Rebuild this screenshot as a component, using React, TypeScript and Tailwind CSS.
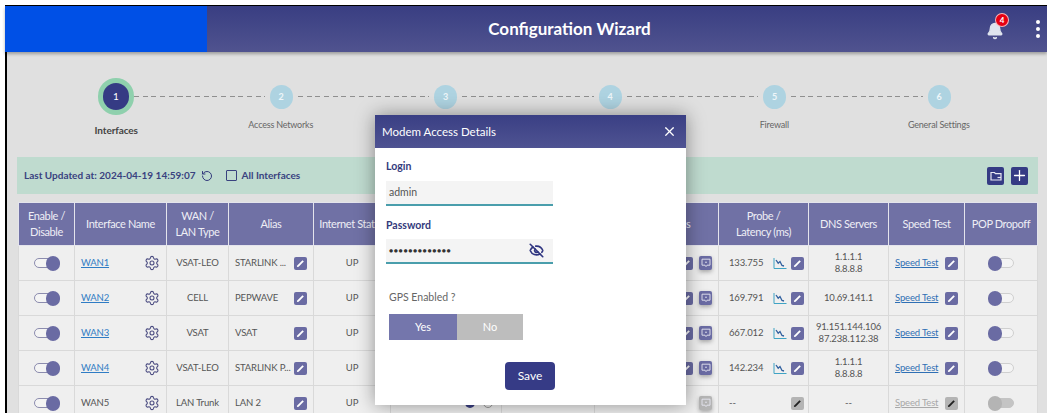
import { Bell, EyeOff, Plus, RotateCcw, Settings, X } from "lucide-react";

type Row = {
  name: string;
  type: string;
  alias: string;
  latency: string;
  dns: string[];
  disabled?: boolean;
};

const ROWS: Row[] = [
  { name: "WAN1", type: "VSAT-LEO", alias: "STARLINK ...", latency: "133.755", dns: ["1.1.1.1", "8.8.8.8"] },
  { name: "WAN2", type: "CELL", alias: "PEPWAVE", latency: "169.791", dns: ["10.69.141.1"] },
  { name: "WAN3", type: "VSAT", alias: "VSAT", latency: "667.012", dns: ["91.151.144.106", "87.238.112.38"] },
  { name: "WAN4", type: "VSAT-LEO", alias: "STARLINK P...", latency: "142.234", dns: ["1.1.1.1", "8.8.8.8"] },
  { name: "WAN5", type: "LAN Trunk", alias: "LAN 2", latency: "--", dns: ["--"], disabled: true },
];

const STEPS = ["Interfaces", "Access Networks", "", "", "Firewall", "General Settings"];

const COLUMNS: { label: string[]; width: string }[] = [
  { label: ["Enable /", "Disable"], width: "w-[56px]" },
  { label: ["Interface Name"], width: "w-[92px]" },
  { label: ["WAN /", "LAN Type"], width: "w-[62px]" },
  { label: ["Alias"], width: "w-[85px]" },
  { label: ["Internet Status"], width: "w-[77px]" },
  { label: [""], width: "w-[111px]" },
  { label: [""], width: "w-[93px]" },
  { label: ["Modem Access"], width: "w-[124px]" },
  { label: ["Probe /", "Latency (ms)"], width: "w-[90px]" },
  { label: ["DNS Servers"], width: "w-[80px]" },
  { label: ["Speed Test"], width: "w-[76px]" },
  { label: ["POP Dropoff"], width: "w-[73px]" },
];

function EditButton({ disabled }: { disabled?: boolean }) {
  return (
    <span
      className={`mt-[1px] flex h-[13px] w-[13px] shrink-0 items-center justify-center rounded-[2px] ${
        disabled ? "bg-[#b4b4b4] text-[#222]" : "bg-[#6a6ba3] text-white"
      }`}
    >
      <svg className="h-[9px] w-[9px]" viewBox="0 0 10 10" fill="currentColor" aria-hidden>
        <path d="M1 9l.4-1.9L7.2 1.3l1.5 1.5-5.8 5.8L1 9z" />
      </svg>
    </span>
  );
}

function RemoteButton({ disabled }: { disabled?: boolean }) {
  return (
    <span
      className={`flex h-[14px] w-[13px] shrink-0 items-center justify-center rounded-[2px] shadow-[0_2px_4px_rgba(0,0,0,0.3)] ${
        disabled ? "bg-[#b4b4b4]" : "bg-[#6a6ba3]"
      }`}
    >
      <svg className="h-[10px] w-[10px]" viewBox="0 0 10 10" fill="none" stroke="#e8e8f2" strokeWidth="0.9" aria-hidden>
        <path d="M1 1.2h8v6H6l-1 1.4-1-1.4H1z" />
        <circle cx="5" cy="4.2" r="0.8" fill="#e8e8f2" stroke="none" />
      </svg>
    </span>
  );
}

function ChartIcon() {
  return (
    <svg className="h-[13px] w-[14px] shrink-0" viewBox="0 0 14 13" fill="none" aria-hidden>
      <path d="M1 1v10.5h12.5" stroke="#3fa3c4" strokeWidth="1" />
      <path d="M3 3l2.2 3.2L7 4.5l2 4 2 .5" stroke="#2f5f9f" strokeWidth="1.3" />
    </svg>
  );
}

function Toggle({ on, disabled }: { on: boolean; disabled?: boolean }) {
  const knob = disabled ? "bg-[#b4b4b4]" : "bg-[#6a6ba3]";
  return (
    <span className="relative mx-auto block h-[15px] w-[26px]">
      <span
        className={`absolute left-0 right-0 top-[2.5px] h-[10px] rounded-full border ${
          disabled && !on ? "border-[#c4c4c4] bg-[#c4c4c4]" : on ? "border-[#8c8cae] bg-[#f4f4f4]" : "border-[#cfcfcf] bg-[#f4f4f4]"
        }`}
      />
      <span className={`absolute top-0 h-[15px] w-[14px] rounded-full ${knob} ${on ? "right-0" : "left-0"}`} />
    </span>
  );
}

function TableRow({ row }: { row: Row }) {
  const cell = "border border-[#d9d9d9] px-[6px] text-center align-middle";
  return (
    <tr className="h-[35px] bg-[#efefef] text-[9.5px] leading-[12px] tracking-[-0.15px] text-[#555]">
      <td className={cell}>
        <Toggle on />
      </td>
      <td className={cell}>
        <div className="flex items-center justify-between">
          {row.disabled ? (
            <span>{row.name}</span>
          ) : (
            <a className="text-[#2f7cc4] underline">{row.name}</a>
          )}
          <Settings className="h-[16px] w-[16px] text-[#4a4b80]" strokeWidth={1.6} />
        </div>
      </td>
      <td className={cell}>{row.type}</td>
      <td className={cell}>
        <div className="flex items-center justify-between">
          <span className="whitespace-nowrap">{row.alias}</span>
          <EditButton />
        </div>
      </td>
      <td className={cell}>UP</td>
      <td className={cell}>
        {row.disabled && (
          <div className="flex justify-end gap-[8px] pr-[2px]">
            <span className="h-[10px] w-[10px] rounded-full bg-[#3a3f82]" />
            <span className="h-[10px] w-[10px] rounded-full border border-[#999]" />
          </div>
        )}
      </td>
      <td className={cell} />
      <td className={cell}>
        <div className="flex items-center justify-end gap-[6px]">
          {!row.disabled && <EditButton />}
          <RemoteButton disabled={row.disabled} />
        </div>
      </td>
      <td className={`${cell} !px-[4px]`}>
        <div className="flex items-center pl-[6px]">
          <span className="w-[44px] text-left">{row.latency}</span>
          <span className="w-[14px]">{!row.disabled && <ChartIcon />}</span>
          <span className="ml-[4px]">
            <EditButton disabled={row.disabled} />
          </span>
        </div>
      </td>
      <td className={cell}>
        {row.dns.map((d) => (
          <div key={d} className="whitespace-nowrap">
            {d}
          </div>
        ))}
      </td>
      <td className={cell}>
        <div className="flex items-center justify-between">
          <a className={`whitespace-nowrap underline ${row.disabled ? "text-[#a8a8a8]" : "text-[#2f6fb4]"}`}>Speed Test</a>
          <EditButton disabled={row.disabled} />
        </div>
      </td>
      <td className={cell}>
        <Toggle on={false} disabled={row.disabled} />
      </td>
    </tr>
  );
}

function ModemDialog() {
  return (
    <div className="absolute left-[375px] top-[115px] flex h-[290px] w-[311px] flex-col bg-white shadow-[0_0_18px_rgba(0,0,0,0.4)]">
      <div className="flex h-[33px] items-center justify-between bg-gradient-to-b from-[#3a3f84] to-[#4f5392] pl-[7px] pr-[9px] text-[11.5px] text-white">
        <span>Modem Access Details</span>
        <X className="h-[15px] w-[15px]" strokeWidth={2} />
      </div>
      <div className="flex flex-col pl-[11px] pt-[11px]">
        <label className="h-[22px] text-[10.5px] font-bold leading-[14px] text-[#333a7c]">Login</label>
        <div className="flex h-[25px] w-[167px] items-center border-b-2 border-[#4a9eac] bg-[#f4f4f4] pl-[3px] text-[10.5px] text-[#555]">
          admin
        </div>
        <label className="mt-[12px] h-[21px] text-[10.5px] font-bold leading-[14px] text-[#333a7c]">Password</label>
        <div className="flex h-[25px] w-[167px] items-center justify-between border-b-2 border-[#4a9eac] bg-[#f4f4f4] pl-[3px] pr-[9px] text-[#333]">
          <span className="text-[7px] tracking-[0.6px]">●●●●●●●●●●●●●</span>
          <EyeOff className="h-[15px] w-[15px] text-[#2f3580]" strokeWidth={2.6} />
        </div>
        <p className="ml-[3px] mt-[26px] text-[10.5px] leading-[14px] text-[#666]">GPS Enabled ?</p>
        <div className="ml-[3px] mt-[10px] flex h-[26px] w-[134px] text-[11px] text-white">
          <span className="flex w-[68px] items-center justify-center bg-[#7476ac]">Yes</span>
          <span className="flex flex-1 items-center justify-center bg-[#bdbdbd]">No</span>
        </div>
        <div className="mt-[22px] flex justify-end pr-[131px]">
          <button className="h-[28px] w-[50px] rounded-[4px] bg-[#363b86] text-[12px] text-white">Save</button>
        </div>
      </div>
    </div>
  );
}

export default function App() {
  return (
    <div className="relative h-[413px] w-full overflow-hidden bg-white pl-[5px] pt-[5px] font-['Lato',sans-serif]">
      <div className="flex h-[408px] flex-col border-l-2 border-t border-black bg-[#e0e0e0]">
        <header className="z-10 -ml-[2px] flex h-[46px] shrink-0 items-stretch bg-gradient-to-b from-[#393e82] to-[#50538f] shadow-[0_2px_3px_rgba(0,0,0,0.3)]">
          <div className="w-[202px] bg-[#0050e6]" />
          <h1 className="flex flex-1 items-center justify-center text-[17px] font-bold text-white">Configuration Wizard</h1>
          <div className="flex w-[115px] items-center pl-[54px]">
            <span className="relative mt-[3px] block h-[18px] w-[18px]">
              <Bell className="h-[18px] w-[18px] fill-[#dfe4ee] text-[#dfe4ee]" />
              <span className="absolute -top-[9px] left-[9px] flex h-[14px] w-[14px] items-center justify-center rounded-full border border-white/70 bg-[#e60012] text-[8px] font-bold text-white">
                4
              </span>
            </span>
            <span className="ml-[32px] flex flex-col gap-[3.5px]">
              <span className="h-[3.5px] w-[3.5px] rounded-full bg-white" />
              <span className="h-[3.5px] w-[3.5px] rounded-full bg-white" />
              <span className="h-[3.5px] w-[3.5px] rounded-full bg-white" />
            </span>
          </div>
        </header>

        <div className="flex shrink-0 items-center pl-[91px] pt-[26px]">
          {[1, 2, 3, 4, 5, 6].map((n) => (
            <div key={n} className="flex items-center">
              {n === 1 ? (
                <span className="flex h-[37px] w-[36px] items-center justify-center rounded-full bg-[#8fd0ad]">
                  <span className="flex h-[27px] w-[26px] items-center justify-center rounded-full bg-[#353b84] text-[10px] text-white">1</span>
                </span>
              ) : (
                <span className="flex h-[37px] w-[33px] items-center justify-center">
                  <span className="flex h-[24px] w-[23px] items-center justify-center rounded-full bg-[#aed3e1] text-[9px] font-bold text-white/80">{n}</span>
                </span>
              )}
              {n < 6 && (
                <span
                  className={`h-[1.5px] bg-[repeating-linear-gradient(90deg,#8f8f8f_0_5px,transparent_5px_8.7px)] ${
                    n === 1 ? "w-[130.5px]" : "w-[131.5px]"
                  }`}
                />
              )}
            </div>
          ))}
        </div>

        <div className="flex h-[42px] shrink-0 pl-[27px]">
          {STEPS.map((s, i) => (
            <div
              key={i}
              className={`w-[164.5px] text-center ${
                i === 0
                  ? "pt-[8px] text-[10px] font-bold leading-[14px] tracking-[-0.1px] text-[#444]"
                  : "pt-[3px] text-[9px] leading-[14px] tracking-[-0.2px] text-[#666]"
              }`}
            >
              {s}
            </div>
          ))}
        </div>

        <div className="ml-[10px] flex h-[37px] w-[1021px] shrink-0 items-center bg-[#bfdbcf] pl-[7px] pr-[10px] text-[10px] font-bold text-[#39427f]">
          <span>Last Updated at: 2024-04-19 14:59:07</span>
          <RotateCcw className="ml-[5px] h-[12px] w-[12px] text-[#333a7c]" strokeWidth={2} />
          <span className="ml-[13px] h-[11px] w-[11px] rounded-[1px] border border-[#39427f]" />
          <span className="ml-[5px]">All Interfaces</span>
          <span className="ml-auto flex h-[18px] w-[17px] items-center justify-center rounded-[2px] bg-[#353b84]">
            <svg className="h-[12px] w-[12px]" viewBox="0 0 12 12" fill="none" stroke="#e8e8f2" strokeWidth="1.2" aria-hidden>
              <path d="M1 2.5h3.5l1 1.2H11v6.3H1z" />
              <path d="M7.5 7.5H11" />
            </svg>
          </span>
          <span className="ml-[7px] flex h-[18px] w-[17px] items-center justify-center rounded-[2px] bg-[#353b84]">
            <Plus className="h-[17px] w-[17px] text-white" strokeWidth={1.8} />
          </span>
        </div>

        <table className="ml-[11px] mt-[8px] w-[1019px] shrink-0 table-fixed border-collapse">
          <colgroup>
            {COLUMNS.map((c, i) => (
              <col key={i} className={c.width} />
            ))}
          </colgroup>
          <thead>
            <tr className="h-[43px] bg-[#7071a5] text-[11px] font-normal leading-[16px] tracking-[-0.4px] text-[#eeeef5]">
              {COLUMNS.map((c, i) => (
                <th key={i} className="whitespace-nowrap border border-[#e4e4ec] px-0 text-center font-normal">
                  {c.label.map((l) => (
                    <div key={l}>{l}</div>
                  ))}
                </th>
              ))}
            </tr>
          </thead>
          <tbody>
            {ROWS.map((r) => (
              <TableRow key={r.name} row={r} />
            ))}
          </tbody>
        </table>
      </div>
      <ModemDialog />
    </div>
  );
}
